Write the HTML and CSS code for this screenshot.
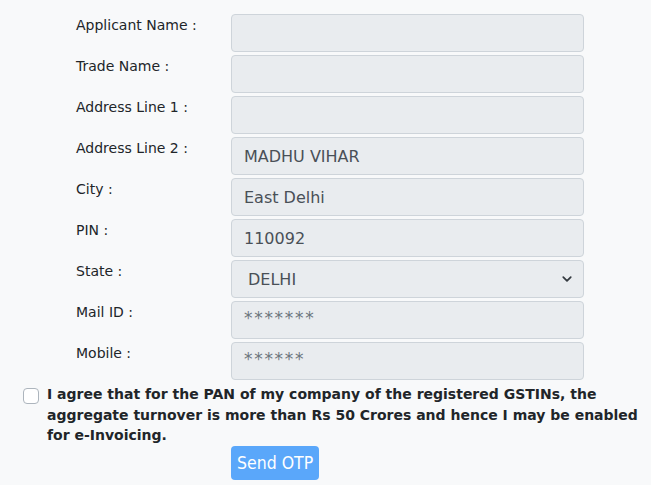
FILE: index.html
```html
<!DOCTYPE html>
<html>
<head>
<meta charset="utf-8">
<link rel="stylesheet" href="styles.css">
</head>
<body>
<div class="page">
  <div class="form">
    <label class="lbl">Applicant Name :</label>
    <input class="ctl" type="text" value="" disabled>
    <label class="lbl">Trade Name :</label>
    <input class="ctl" type="text" value="" disabled>
    <label class="lbl">Address Line 1 :</label>
    <input class="ctl" type="text" value="" disabled>
    <label class="lbl">Address Line 2 :</label>
    <input class="ctl" type="text" value="MADHU VIHAR" disabled>
    <label class="lbl">City :</label>
    <input class="ctl" type="text" value="East Delhi" disabled>
    <label class="lbl">PIN :</label>
    <input class="ctl" type="text" value="110092" disabled>
    <label class="lbl">State :</label>
    <div class="ctl sel"><span class="sel-val">DELHI</span>
      <svg class="chev" width="10" height="10" viewBox="0 0 16 16"><path d="M2 5l6 6 6-6" fill="none" stroke="#343a40" stroke-width="2.8" stroke-linecap="round" stroke-linejoin="round"/></svg>
    </div>
    <label class="lbl">Mail ID :</label>
    <input class="ctl mask" type="text" value="*******" disabled>
    <label class="lbl">Mobile :</label>
    <input class="ctl mask" type="text" value="******" disabled>
  </div>
  <div class="agree">
    <span class="box"></span>
    <p class="agree-text">I agree that for the PAN of my company of the registered GSTINs, the aggregate turnover is more than Rs 50 Crores and hence I may be enabled for e-Invoicing.</p>
  </div>
  <div class="actions">
    <button class="btn">Send OTP</button>
  </div>
</div>
</body>
</html>
```
FILE: styles.css
```css
html, body {
  margin: 0;
  background: #f8f9fa;
}
body {
  font-family: "DejaVu Sans", Verdana, sans-serif;
  color: #212529;
}
.page {
  padding-top: 14px;
}
.form {
  display: grid;
  grid-template-columns: 155px 353px;
  row-gap: 3px;
  padding-left: 76px;
}
.lbl {
  font-size: 14px;
  line-height: 20px;
  padding-top: 1px;
  color: #212529;
}
.ctl {
  box-sizing: border-box;
  height: 38px;
  width: 353px;
  margin: 0;
  background: #e9ecef;
  border: 1px solid #ced4da;
  border-radius: 4px;
  padding: 0 12px;
  font-family: "DejaVu Sans", Verdana, sans-serif;
  font-size: 16px;
  color: #495057;
  opacity: 1;
  -webkit-text-fill-color: #495057;
}
.mask {
  color: #6c757d;
  -webkit-text-fill-color: #6c757d;
  font-size: 17px;
  letter-spacing: 1.7px;
  padding-bottom: 4px;
}
.sel {
  display: flex;
  align-items: center;
  justify-content: space-between;
  padding: 0 11px 0 16px;
}
.sel-val {
  color: #495057;
}
.agree {
  display: flex;
  align-items: flex-start;
  margin-top: 4px;
  padding-left: 23px;
}
.box {
  flex: none;
  box-sizing: border-box;
  width: 16px;
  height: 16px;
  border: 1px solid #adb5bd;
  border-radius: 4px;
  background: #fff;
  margin-top: 4px;
  margin-right: 8px;
}
.agree-text {
  margin: 0;
  font-family: "DejaVu Sans", sans-serif;
  font-weight: bold;
  font-size: 14px;
  line-height: 20.5px;
  color: #212529;
}
.actions {
  padding-left: 231px;
  margin-top: 0;
}
.btn {
  background: #5aa7fa;
  color: #fff;
  border: none;
  border-radius: 4px;
  height: 34px;
  padding: 0 6px;
  font-family: "DejaVu Sans Condensed", sans-serif;
  font-size: 17.5px;
}
```
